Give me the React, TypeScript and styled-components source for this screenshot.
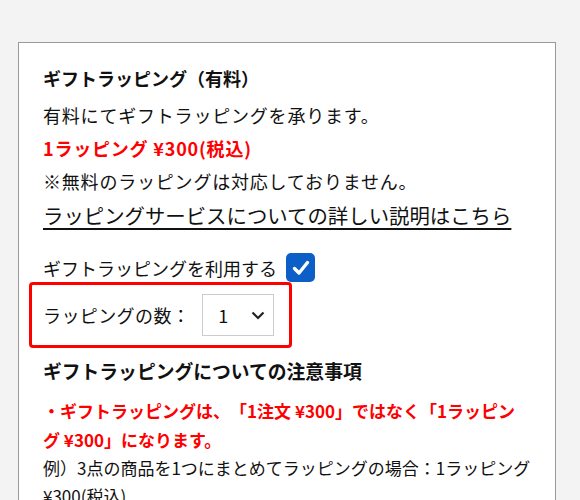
import styled, { createGlobalStyle } from "styled-components";

const GlobalStyle = createGlobalStyle`
  body {
    margin: 0;
    background: #f3f3f3;
    font-family: "Noto Sans CJK JP", "Noto Sans", sans-serif;
    color: #111;
    text-spacing-trim: space-all;
  }
`;

const Page = styled.main`
  padding: 42px 24px 0 18px;
`;

const Card = styled.section`
  background: #fff;
  border: 1px solid #999;
  padding: 20px 24px 40px 24px;
`;

const Title = styled.h2`
  margin: 0 0 6px;
  font-size: 18px;
  font-weight: 700;
  line-height: 30px;
`;

const Text = styled.p<{ $red?: boolean; $bold?: boolean }>`
  margin: 0;
  font-size: 18px;
  line-height: 33px;
  letter-spacing: 0.8px;
  color: ${(p) => (p.$red ? "#f00" : "#111")};
  font-weight: ${(p) => (p.$bold ? 700 : 400)};
`;

const DetailLink = styled.a`
  display: inline-block;
  margin-top: 1px;
  font-size: 20.4px;
  line-height: 32px;
  color: #111;
  text-decoration: underline;
  text-underline-offset: 4px;
`;

const CheckRow = styled.label`
  display: flex;
  align-items: center;
  gap: 9px;
  margin-top: 22px;
  font-size: 18px;
`;

const CheckBox = styled.span`
  width: 29px;
  height: 29px;
  border-radius: 5px;
  background: #0b5fc6;
  display: flex;
  align-items: center;
  justify-content: center;
`;

const Highlight = styled.div`
  display: inline-flex;
  align-items: center;
  gap: 12px;
  margin: 0 0 0 -14px;
  padding: 9px 15px 9px 11px;
  border: 3px solid #f00;
  border-radius: 4px;
  font-size: 18px;
  letter-spacing: 0.4px;
`;

const SelectBox = styled.div`
  width: 72px;
  height: 42px;
  box-sizing: border-box;
  border: 1px solid #ccc;
  display: flex;
  align-items: center;
  justify-content: space-between;
  padding: 0 7px 0 15px;
  font-size: 18px;
`;

const SubTitle = styled.h3`
  margin: 8px 0 10px;
  font-size: 18.8px;
  font-weight: 700;
  line-height: 30px;
`;

const Notes = styled.div`
  font-size: 17px;
  line-height: 28px;
`;

const Warning = styled.div`
  color: #f00;
  font-weight: 700;
  line-height: 29px;
`;

export default function App() {
  return (
    <>
      <GlobalStyle />
      <Page>
        <Card>
          <Title>ギフトラッピング（有料）</Title>
          <Text>有料にてギフトラッピングを承ります。</Text>
          <Text $red $bold>1ラッピング ¥300(税込)</Text>
          <Text>※無料のラッピングは対応しておりません。</Text>
          <DetailLink href="#">ラッピングサービスについての詳しい説明はこちら</DetailLink>
          <CheckRow>
            ギフトラッピングを利用する
            <CheckBox>
              <svg width="20" height="20" viewBox="0 0 20 20">
                <path d="M3.5 10.5 L8 15 L16.5 4.5" fill="none" stroke="#fff" strokeWidth="3.4" strokeLinecap="round" strokeLinejoin="round" />
              </svg>
            </CheckBox>
          </CheckRow>
          <Highlight>
            ラッピングの数：
            <SelectBox>
              <span>1</span>
              <svg width="16" height="16" viewBox="0 0 16 16">
                <path d="M2.5 5.5 L8 11 L13.5 5.5" fill="none" stroke="#222" strokeWidth="2.2" />
              </svg>
            </SelectBox>
          </Highlight>
          <SubTitle>ギフトラッピングについての注意事項</SubTitle>
          <Notes>
            <Warning>・ギフトラッピングは、「1注文 ¥300」ではなく「1ラッピング ¥300」になります。</Warning>
            例）3点の商品を1つにまとめてラッピングの場合：1ラッピング ¥300(税込)
          </Notes>
        </Card>
      </Page>
    </>
  );
}
